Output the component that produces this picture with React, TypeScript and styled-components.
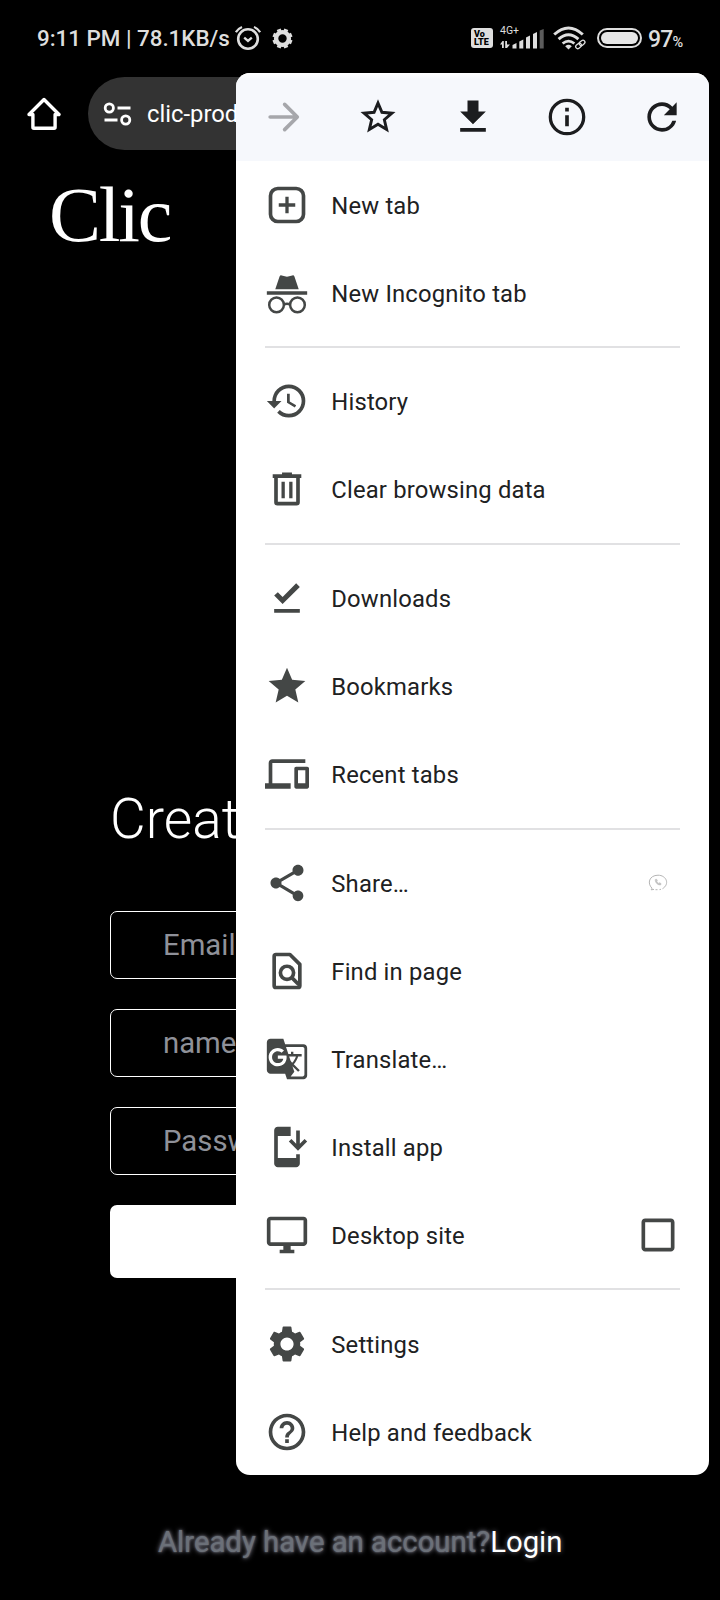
import React from "react";
import styled, { createGlobalStyle, css } from "styled-components";
import {
  MdCheckBoxOutlineBlank,
  MdDevices,
  MdFileDownload,
  MdGTranslate,
  MdHelpOutline,
  MdHistory,
  MdRefresh,
  MdSettings,
  MdShare,
  MdStar,
} from "react-icons/md";

const GlobalStyle = createGlobalStyle`
  * { box-sizing: border-box; }
  body {
    margin: 0;
    background: #000;
    font-family: Roboto, sans-serif;
  }
`;

const Screen = styled.div`
  position: relative;
  width: 720px;
  height: 1600px;
  overflow: hidden;
  display: flex;
  flex-direction: column;
  background: #000;
  color: #fff;
`;

/* ---------- status bar ---------- */

const StatusBar = styled.header`
  height: 77px;
  padding: 0 37px 1px 37px;
  display: flex;
  align-items: center;
  justify-content: space-between;
  color: #dedede;
`;

const StatusGroup = styled.div<{ $gap: number }>`
  display: flex;
  align-items: center;
  gap: ${(p) => p.$gap}px;
`;

const Clock = styled.span`
  font-size: 22.4px;
  font-weight: 500;
  line-height: 28px;
  letter-spacing: -0.02px;
  white-space: nowrap;
`;

const VolteBadge = styled.div`
  width: 22px;
  height: 20px;
  padding: 2px 0 0 3px;
  border-radius: 3px;
  background: #dedede;
  color: #000;
  font: 900 9px/8px Roboto, sans-serif;
`;

const SignalStack = styled.div`
  width: 44px;
  height: 22px;
  margin-right: 2px;
  display: flex;
  flex-direction: column;
`;

const NetworkType = styled.span`
  font-size: 10.5px;
  line-height: 8px;
  height: 2px;
`;

const BatteryText = styled.span`
  display: flex;
  align-items: baseline;
  width: 35px;
  margin-left: -1px;
  padding-top: 3px;
  font-size: 23px;
  font-weight: 500;
  line-height: 28px;
  letter-spacing: -0.8px;
`;

const Percent = styled.span`
  font-size: 14.5px;
  line-height: 14px;
`;

/* ---------- browser bar ---------- */

const BrowserBar = styled.div`
  height: 73px;
  display: flex;
  align-items: center;
  padding-left: 27px;
`;

const AddressPill = styled.div`
  width: 560px;
  height: 73px;
  margin-left: 27px;
  padding-left: 15px;
  border-radius: 37px;
  display: flex;
  align-items: center;
  gap: 15px;
  background: #333;
  font-size: 23.8px;
`;

/* ---------- page behind the menu ---------- */

const Logo = styled.h1`
  margin: 20px 0 0 49px;
  height: 90px;
  font: 400 78px/90px "Liberation Serif", serif;
  letter-spacing: -2.2px;
`;

const SignupForm = styled.form`
  width: 500px;
  margin: 527px 0 0 110px;
  display: flex;
  flex-direction: column;
  gap: 30px;
`;

const Heading = styled.h2`
  margin: 0 0 33px;
  height: 61px;
  font-size: 55px;
  font-weight: 300;
  line-height: 64px;
`;

const Field = styled.div`
  height: 68px;
  padding: 0 52px;
  display: flex;
  align-items: center;
  border: 1.6px solid #fff;
  border-radius: 7px;
  color: #8f9199;
  font-size: 29.3px;
  line-height: 66px;
  white-space: nowrap;
`;

const SubmitButton = styled.div`
  height: 73px;
  border-radius: 7px;
  background: #fff;
`;

const LoginLine = styled.p`
  margin: 246px 0 0;
  padding-left: 158px;
  font-size: 29.3px;
  line-height: 36px;
  white-space: nowrap;
  color: #6b7078;
  text-shadow: 0 0 2px rgba(120, 124, 138, 0.9), 0 0 5px rgba(190, 190, 210, 0.75);
`;

const LoginLink = styled.span`
  color: #fff;
  text-shadow: 0 0 5px rgba(190, 190, 210, 0.6);
`;

/* ---------- menu ---------- */

const Menu = styled.nav`
  position: absolute;
  left: 236px;
  top: 72.7px;
  width: 473.3px;
  height: 1402.6px;
  border-radius: 14px;
  overflow: hidden;
  background: #fff;
  color: #1f1f1f;
`;

const MenuToolbar = styled.div`
  height: 88px;
  display: flex;
  background: linear-gradient(#fff 0, #f6f8fc 6px);
`;

const ToolbarButton = styled.div<{ $disabled?: boolean }>`
  flex: 1;
  display: flex;
  align-items: center;
  justify-content: center;
  color: ${(p) => (p.$disabled ? "#a6a7ab" : "#1c1d1f")};
`;

const MenuGroup = styled.div<{ $first?: boolean }>`
  ${(p) =>
    !p.$first &&
    css`
      &::before {
        content: "";
        display: block;
        height: 2px;
        margin: 9.3px 29.3px 9.5px;
        background: #e1e1e3;
      }
    `}
`;

const MenuRow = styled.div`
  height: 88px;
  padding: 0 29.3px;
  display: flex;
  align-items: center;
  color: #444746;
`;

const MenuLabel = styled.span`
  flex: 1;
  margin-left: 22px;
  padding-top: 2px;
  color: #202122;
  font-size: 23.8px;
  line-height: 30px;
  letter-spacing: 0.18px;
`;

const TrailingSlot = styled.div`
  width: 44px;
  height: 44px;
  display: flex;
  align-items: center;
  justify-content: center;
`;

/* ---------- drawn icons ---------- */

const Icon = ({ children }: { children: React.ReactNode }) => (
  <svg width="44" height="44" viewBox="0 0 24 24" fill="currentColor">
    {children}
  </svg>
);

const ForwardIcon = () => (
  <Icon>
    <path
      d="M5 12h14M12.9 5.1l6.9 6.9-6.9 6.9"
      fill="none"
      stroke="currentColor"
      strokeWidth="2"
      strokeLinecap="round"
      strokeLinejoin="round"
    />
  </Icon>
);

const StarOutlineIcon = () => (
  <Icon>
    <path
      d="M12 4.400l2.150 5.050 5.450.47-4.130 3.580 1.240 5.330L12 16l-4.710 2.830 1.240-5.330L4.400 9.920l5.450-.47z"
      fill="none"
      stroke="currentColor"
      strokeWidth="1.6"
    />
  </Icon>
);

const InfoIcon = () => (
  <Icon>
    <circle cx="12" cy="12" r="9.1" fill="none" stroke="currentColor" strokeWidth="1.8" />
    <path d="M11 7h2v2h-2zM11 11h2v6h-2z" />
  </Icon>
);

const NewTabIcon = () => (
  <Icon>
    <rect x="3" y="3" width="18" height="18" rx="4" fill="none" stroke="currentColor" strokeWidth="2" />
    <path d="M11.100 7.500h1.800v3.600h3.600v1.800h-3.600v3.600h-1.800v-3.600H7.500v-1.800h3.600z" />
  </Icon>
);

const IncognitoIcon = () => (
  <Icon>
    <path d="M5.6 10 7.9 3.1Q8.2 2.2 9.1 2.4L12 3.1 14.9 2.4Q15.8 2.2 16.1 3.1L18.4 10zM1 11.1h22v1.8H1z" />
    <g fill="none" stroke="currentColor" strokeWidth="1.35">
      <circle cx="6.300" cy="18.5" r="4" />
      <circle cx="17.700" cy="18.5" r="4" />
      <path d="M10.300 18.3q1.700-.8 3.400 0" />
    </g>
  </Icon>
);

const TrashIcon = () => (
  <Icon>
    <path
      fillRule="evenodd"
      d="M4.2 4H9.3V3h5.4v1h5.1v2H19v13.2q0 1.8-1.8 1.8H6.8Q5 21 5 19.2V6h-.8zM7 6v13h10V6zM9 8h1.8v9H9zM13.2 8H15v9h-1.8z"
    />
  </Icon>
);

const DownloadedIcon = () => (
  <Icon>
    <path d="M5 18h14v2H5zM9.600 15.300 5 10.700l2-1.900 2.600 2.600L17 4l2 2z" />
  </Icon>
);

const FindInPageIcon = () => (
  <Icon>
    <g fill="none" stroke="currentColor" strokeWidth="2" strokeLinejoin="round">
      <path d="M6 3h7.6L19 8.4V20q0 1-1 1H6q-1 0-1-1V4q0-1 1-1z" />
      <circle cx="12" cy="13" r="3.6" />
      <path d="M14.5 15.5l4 4" />
    </g>
  </Icon>
);

const InstallIcon = () => (
  <Icon>
    <path d="M17 18H7V6h7V1H7c-1.1 0-2 .9-2 2v18c0 1.1.9 2 2 2h10c1.1 0 2-.9 2-2v-5h-2v2z" />
    <path d="M18 14l5-5-1.41-1.41L19 10.17V3h-2v7.17l-2.59-2.58L13 9z" />
  </Icon>
);

const DesktopIcon = () => (
  <Icon>
    <path d="M21 2H3c-1.1 0-2 .9-2 2v12c0 1.1.9 2 2 2h7v2H8v2h8v-2h-2v-2h7c1.1 0 2-.9 2-2V4c0-1.1-.9-2-2-2zm0 14H3V4h18v12z" />
  </Icon>
);

const ChatCallIcon = () => (
  <svg width="20" height="18" viewBox="0 0 20 18" fill="none" stroke="#b5b5b5" strokeWidth="1">
    <path d="M4 14.2C-1 9.5 1 1.3 10 1.2c8.500 0 12 9 4.500 13.500M4 14.200l-.8 1.600 2.800-.4M7.500 15.700h2M11.500 15.600l1.500-.3" />
    <path d="M7.300 5.400c-.6 2.800 2.600 6.200 5.600 5.400l.1-1.300-1.700-.8-.9.700-1.500-1.900.5-.9-.8-1.400z" fill="#c6c6c6" strokeWidth=".5" />
  </svg>
);

const HomeIcon = () => (
  <svg width="34" height="34" viewBox="0 0 34 34" fill="none" stroke="#fff" strokeWidth="3.4" strokeLinejoin="round">
    <path d="M2 17.500 17 2.500l15 15h-3.900V30.200q0 1-1 1H6.900q-1 0-1-1V17.500z" />
  </svg>
);

const TuneIcon = () => (
  <svg width="29" height="24" viewBox="0 0 29 24" fill="none" stroke="#fff" strokeWidth="2.8">
    <circle cx="6.300" cy="6" r="4.100" />
    <circle cx="22.700" cy="18" r="4.100" />
    <path d="M14.500 6h13M1.500 18h13" />
  </svg>
);

const AlarmIcon = () => (
  <svg width="26" height="26" viewBox="0 0 26 26" fill="none" stroke="#dedede" strokeWidth="2.600">
    <circle cx="13" cy="14" r="9.800" />
    <path d="M9.200 12.600l3.800 3.300 3.800-3.300" strokeWidth="2.300" />
    <path d="M.9 7.200Q3 3.600 7 2M25.100 7.200Q23 3.600 19 2" strokeWidth="2.300" />
  </svg>
);

const StatusGearIcon = () => (
  <svg width="21" height="21" viewBox="-10.500 -10.500 21 21" fill="none" stroke="#dedede">
    <circle r="6.400" strokeWidth="4.400" />
    {[22.5, 67.5, 112.5, 157.5].map((a) => (
      <path key={a} d="M0-10v3M0 10v-3" strokeWidth="4.200" transform={`rotate(${a})`} />
    ))}
  </svg>
);

const SignalIcon = () => (
  <svg width="44" height="20" viewBox="0 0 44 20" fill="#dedede">
    <path d="M0 15.500l2.500-3.500h1.300v7H2v-3.500zM5.200 12H7v3.500h3L7 19H5.200z" />
    <path d="M12.500 19.500v-3.500l4-2v5.500z" />
    <path d="M19.300 19.500v-7l4-2v9z" />
    <path d="M26 19.500V8.500l4-2v13z" />
    <path d="M33 19.500V5l4-2v16.500z" />
    <path d="M39.700 19.500V1.500l4-1.500v19.500z" fill="#5c5c5c" />
  </svg>
);

const WifiIcon = () => (
  <svg width="34" height="24" viewBox="0 0 34 24" fill="none" stroke="#dedede" strokeWidth="3">
    <path d="M1.200 8.500q14.300-13 28.600 0M5.600 13.200q9.900-8.900 19.800 0" />
    <path d="M12.200 20.200q3.300-2.700 6.600 0L15.500 23.500z" fill="#dedede" stroke="none" />
    <path d="M9.600 17.500q5.900-4.900 11.800 0" strokeWidth="2.700" />
    <g stroke="#000" strokeWidth="4">
      <rect x="23" y="17.500" width="6.500" height="4.500" rx="2.200" transform="rotate(-40 26 20)" />
    </g>
    <g strokeWidth="1.300">
      <rect x="22.500" y="18" width="6.200" height="4" rx="2" transform="rotate(-40 25.500 20)" />
      <rect x="26" y="15" width="6.200" height="4" rx="2" transform="rotate(-40 29 17)" />
    </g>
  </svg>
);

const BatteryIcon = () => (
  <svg width="45" height="20" viewBox="0 0 45 20">
    <rect x="1" y="1" width="43" height="18" rx="9" fill="none" stroke="#dedede" strokeWidth="2" />
    <rect x="4" y="4" width="37" height="12" rx="6" fill="#e6e6e6" />
  </svg>
);

/* ---------- data ---------- */

type Entry = { label: string; icon: React.ReactNode; trailing?: React.ReactNode };

const groups: Entry[][] = [
  [
    { label: "New tab", icon: <NewTabIcon /> },
    { label: "New Incognito tab", icon: <IncognitoIcon /> },
  ],
  [
    { label: "History", icon: <MdHistory size={44} /> },
    { label: "Clear browsing data", icon: <TrashIcon /> },
  ],
  [
    { label: "Downloads", icon: <DownloadedIcon /> },
    { label: "Bookmarks", icon: <MdStar size={44} /> },
    { label: "Recent tabs", icon: <MdDevices size={44} /> },
  ],
  [
    { label: "Share…", icon: <MdShare size={44} />, trailing: <ChatCallIcon /> },
    { label: "Find in page", icon: <FindInPageIcon /> },
    { label: "Translate…", icon: <MdGTranslate size={44} /> },
    { label: "Install app", icon: <InstallIcon /> },
    { label: "Desktop site", icon: <DesktopIcon />, trailing: <MdCheckBoxOutlineBlank size={44} /> },
  ],
  [
    { label: "Settings", icon: <MdSettings size={44} /> },
    { label: "Help and feedback", icon: <MdHelpOutline size={44} /> },
  ],
];

export default function App() {
  return (
    <>
      <GlobalStyle />
      <Screen>
        <StatusBar>
          <StatusGroup $gap={11}>
            <StatusGroup $gap={5}>
              <Clock>9:11 PM | 78.1KB/s</Clock>
              <AlarmIcon />
            </StatusGroup>
            <StatusGearIcon />
          </StatusGroup>
          <StatusGroup $gap={7}>
            <VolteBadge>
              Vo
              <br />
              LTE
            </VolteBadge>
            <SignalStack>
              <NetworkType>4G+</NetworkType>
              <SignalIcon />
            </SignalStack>
            <StatusGroup $gap={10}>
              <WifiIcon />
              <BatteryIcon />
            </StatusGroup>
            <BatteryText>
              97<Percent>%</Percent>
            </BatteryText>
          </StatusGroup>
        </StatusBar>

        <BrowserBar>
          <HomeIcon />
          <AddressPill>
            <TuneIcon />
            clic-prod
          </AddressPill>
        </BrowserBar>

        <Logo>Clic</Logo>

        <SignupForm>
          <Heading>Create</Heading>
          <Field>Email</Field>
          <Field>name</Field>
          <Field>Password</Field>
          <SubmitButton />
        </SignupForm>

        <LoginLine>
          Already have an account?<LoginLink>Login</LoginLink>
        </LoginLine>

        <Menu>
          <MenuToolbar>
            <ToolbarButton $disabled>
              <ForwardIcon />
            </ToolbarButton>
            <ToolbarButton>
              <StarOutlineIcon />
            </ToolbarButton>
            <ToolbarButton>
              <MdFileDownload size={44} />
            </ToolbarButton>
            <ToolbarButton>
              <InfoIcon />
            </ToolbarButton>
            <ToolbarButton>
              <MdRefresh size={44} />
            </ToolbarButton>
          </MenuToolbar>
          {groups.map((entries, i) => (
            <MenuGroup key={i} $first={i === 0}>
              {entries.map((entry) => (
                <MenuRow key={entry.label}>
                  {entry.icon}
                  <MenuLabel>{entry.label}</MenuLabel>
                  {entry.trailing && <TrailingSlot>{entry.trailing}</TrailingSlot>}
                </MenuRow>
              ))}
            </MenuGroup>
          ))}
        </Menu>
      </Screen>
    </>
  );
}
